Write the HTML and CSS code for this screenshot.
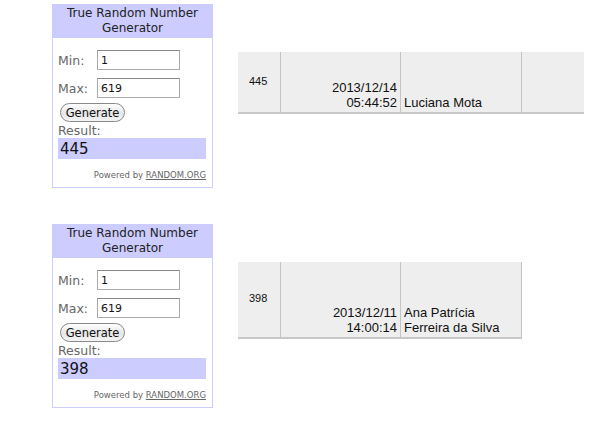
FILE: index.html
```html
<!DOCTYPE html>
<html lang="en">
<head>
  <meta charset="UTF-8">
  <title>Sorteio</title>
  <link rel="stylesheet" href="styles.css">
</head>
<body>
  <div class="draw draw-first">
    <div class="rng">
      <div class="rng-title">True Random Number Generator</div>
      <div class="rng-body">
        <div class="rng-field"><span class="rng-label">Min:</span><input class="rng-input" type="text" value="1"></div>
        <div class="rng-field"><span class="rng-label">Max:</span><input class="rng-input" type="text" value="619"></div>
        <button class="rng-button">Generate</button>
        <div class="rng-label">Result:</div>
        <div class="rng-result">445</div>
        <div class="rng-powered">Powered by <a href="#">RANDOM.ORG</a></div>
      </div>
    </div>
    <table class="entries entries-wide">
      <tr>
        <td class="num">445</td>
        <td class="date">2013/12/14<br>05:44:52</td>
        <td class="name">Luciana Mota</td>
        <td class="extra"></td>
      </tr>
    </table>
  </div>

  <div class="draw draw-second">
    <div class="rng">
      <div class="rng-title">True Random Number Generator</div>
      <div class="rng-body">
        <div class="rng-field"><span class="rng-label">Min:</span><input class="rng-input" type="text" value="1"></div>
        <div class="rng-field"><span class="rng-label">Max:</span><input class="rng-input" type="text" value="619"></div>
        <button class="rng-button">Generate</button>
        <div class="rng-label">Result:</div>
        <div class="rng-result">398</div>
        <div class="rng-powered">Powered by <a href="#">RANDOM.ORG</a></div>
      </div>
    </div>
    <table class="entries entries-tall">
      <tr>
        <td class="num">398</td>
        <td class="date">2013/12/11<br>14:00:14</td>
        <td class="name">Ana Patrícia<br>Ferreira da Silva</td>
      </tr>
    </table>
  </div>
</body>
</html>
```

FILE: styles.css
```css
body {
  margin: 0;
  background: #fff;
  font-family: "DejaVu Sans", Verdana, sans-serif;
}

.draw {
  display: flex;
  align-items: flex-start;
  gap: 25px;
  padding-left: 52px;
}

.draw-first {
  padding-top: 4px;
}

.draw-second {
  padding-top: 36px;
}

/* random.org widget */
.rng {
  width: 159px;
  height: 182px;
  border: 1px solid #ccccff;
  background: #fff;
}

.rng-title {
  background: #ccccff;
  color: #222;
  text-align: center;
  font-size: 12px;
  line-height: 15px;
  padding: 1px 4px 2px;
}

.rng-body {
  padding: 12px 5px 0 5px;
}

.rng-field {
  display: flex;
  align-items: center;
  height: 20px;
  margin-bottom: 8px;
}

.rng-label {
  display: block;
  width: 39px;
  color: #666;
  font-size: 12.5px;
  line-height: 15px;
}

.rng-input {
  width: 75px;
  height: 14px;
  padding: 2px 3px;
  border: 1px solid #aaa;
  border-top-color: #888;
  font-family: "DejaVu Sans", Verdana, sans-serif;
  font-size: 11px;
  color: #111;
  margin: 0;
}

.rng-button {
  display: block;
  margin: -3px 0 0 2px;
  width: 65px;
  height: 19px;
  padding: 0;
  border: 1px solid #8a8a8a;
  border-radius: 10px;
  background: linear-gradient(#ffffff, #e6e6e6 55%, #f4f4f4);
  font-family: "DejaVu Sans", Verdana, sans-serif;
  font-size: 11.5px;
  color: #111;
}

.rng-button + .rng-label {
  margin-top: 1px;
}

.rng-result {
  margin-top: 0;
  width: 146px;
  height: 21px;
  background: #ccccff;
  font-size: 15px;
  line-height: 22px;
  padding-left: 2px;
  color: #111;
}

.rng-powered {
  margin-top: 11px;
  text-align: right;
  font-size: 8.5px;
  color: #666;
  padding-right: 1px;
}

.rng-powered a {
  color: #666;
}

/* results table */
.entries {
  border-collapse: collapse;
  background: #eeeeee;
  font-family: "Liberation Sans", Arial, sans-serif;
  font-size: 13px;
  line-height: 15px;
  color: #111;
}

.entries-wide {
  margin-top: 48px;
}

.entries-tall {
  margin-top: 38px;
}

.entries td {
  padding: 0 3px 2px;
  border-right: 1px solid #c4c4c4;
  border-bottom: 2px solid #c8c8c8;
  vertical-align: bottom;
}

.entries-wide td {
  height: 58px;
}

.entries-tall td {
  height: 73px;
}

.entries .num {
  width: 31px;
  padding-left: 11px;
  padding-right: 0;
  font-size: 11px;
  vertical-align: middle;
  padding-bottom: 2px;
}

.entries .date {
  width: 113px;
  text-align: right;
}

.entries .name {
  width: 114px;
  text-align: left;
}

.entries .extra {
  width: 56px;
  border-right: none;
}
```
